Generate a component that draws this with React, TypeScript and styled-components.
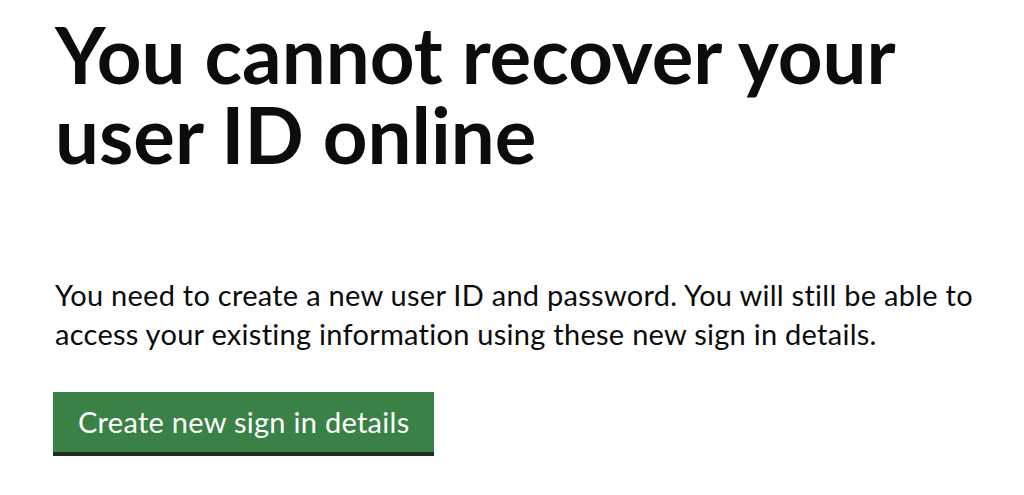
import React from 'react';
import styled, { createGlobalStyle } from 'styled-components';

const GlobalStyle = createGlobalStyle`
  html, body {
    margin: 0;
    padding: 0;
    background: #ffffff;
  }
  body {
    font-family: Lato, 'Open Sans', Arial, sans-serif;
    color: #0b0c0c;
  }
`;

export default function App() {
  return (
    <>
      <GlobalStyle />
      <Page>
        <Heading>You cannot recover your user ID online</Heading>
        <Body>
          You need to create a new user ID and password. You will still be able to access your
          existing information using these new sign in details.
        </Body>
        <Button type="button">Create new sign in details</Button>
      </Page>
    </>
  );
}

const Page = styled.main`
  padding: 14px 20px 0 55px;
  display: flex;
  flex-direction: column;
  align-items: flex-start;
`;

const Heading = styled.h1`
  margin: 0;
  max-width: 940px;
  font-family: Lato, 'Open Sans', Arial, sans-serif;
  font-weight: 700;
  font-size: 78px;
  line-height: 80px;
  color: #0b0c0c;
`;

const Body = styled.p`
  margin: 101px 0 0;
  max-width: 945px;
  font-family: Lato, 'Open Sans', Arial, sans-serif;
  font-size: 29px;
  line-height: 39px;
  letter-spacing: 0.27px;
  color: #0b0c0c;
`;

const Button = styled.button`
  margin: 39px 0 4px -2px;
  padding: 11px 25px 11px;
  border: 0;
  border-radius: 0;
  background: #3a8146;
  box-shadow: 0 4px 0 #1f2a22;
  font-family: Lato, 'Open Sans', Arial, sans-serif;
  font-size: 29px;
  line-height: 38px;
  letter-spacing: 0.28px;
  color: #ffffff;
  cursor: pointer;
`;
